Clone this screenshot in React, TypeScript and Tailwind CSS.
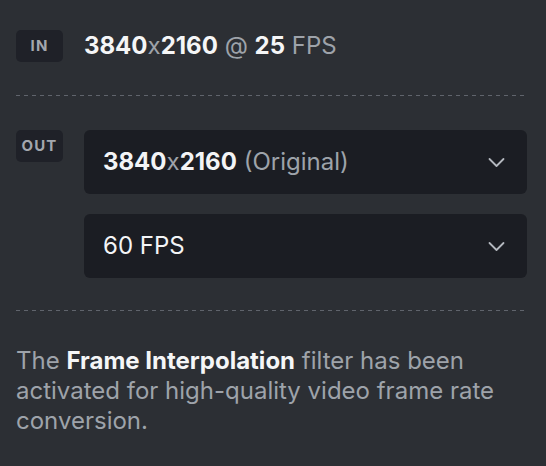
import { ReactNode } from "react";

function Badge({ children }: { children: ReactNode }) {
  return (
    <div className="flex h-[32px] w-[47px] shrink-0 items-center justify-center rounded-[5px] bg-[#1f2128] text-[15px] font-bold tracking-[0.08em] text-[#a3a7ae]">
      {children}
    </div>
  );
}

function Chevron() {
  return (
    <svg width="17" height="11" viewBox="0 0 17 11" fill="none" className="shrink-0">
      <path d="M1.5 2 L8.5 9 L15.5 2" stroke="#b4b8bf" strokeWidth="1.8" strokeLinecap="round" strokeLinejoin="round" />
    </svg>
  );
}

function Select({ children }: { children: ReactNode }) {
  return (
    <div className="flex h-[64px] w-full items-center justify-between rounded-[6px] bg-[#1b1d23] pl-[19px] pr-[22px]">
      <div className="text-[24px] leading-[32px] text-[#f3f4f6]">{children}</div>
      <Chevron />
    </div>
  );
}

function Dashes() {
  return <div className="h-px w-full bg-[linear-gradient(to_right,#60646c_50%,transparent_50%)] bg-[length:8px_1px]" />;
}

export default function App() {
  return (
    <div
      className="h-[466px] w-[546px] bg-[#2c2f34] pl-[16px] pr-[19px] pt-[30px]"
      style={{ fontFamily: "Inter, 'Noto Sans', sans-serif" }}
    >
      {/* input */}
      <div className="flex items-center gap-[21px]">
        <Badge>IN</Badge>
        <div className="text-[24px] leading-[32px] text-[#9ea3aa]">
          <span className="font-bold text-[#f5f6f7]">3840</span>x
          <span className="font-bold text-[#f5f6f7]">2160</span> @{" "}
          <span className="font-bold text-[#f5f6f7]">25</span> FPS
        </div>
      </div>

      <div className="mt-[33px]">
        <Dashes />
      </div>

      {/* output */}
      <div className="mt-[34px] flex items-start gap-[21px]">
        <Badge>OUT</Badge>
        <div className="flex flex-1 flex-col gap-[20px]">
          <Select>
            <span className="font-bold">3840</span>
            <span className="text-[#9ea3aa]">x</span>
            <span className="font-bold">2160</span>
            <span className="text-[#9ea3aa]"> (Original)</span>
          </Select>
          <Select>60 FPS</Select>
        </div>
      </div>

      <div className="mt-[32px]">
        <Dashes />
      </div>

      <p className="mt-[35px] text-[24px] leading-[30px] text-[#9ea3aa]">
        The <span className="font-bold text-[#f5f6f7]">Frame Interpolation</span> filter has been activated for
        high-quality video frame rate conversion.
      </p>
    </div>
  );
}
